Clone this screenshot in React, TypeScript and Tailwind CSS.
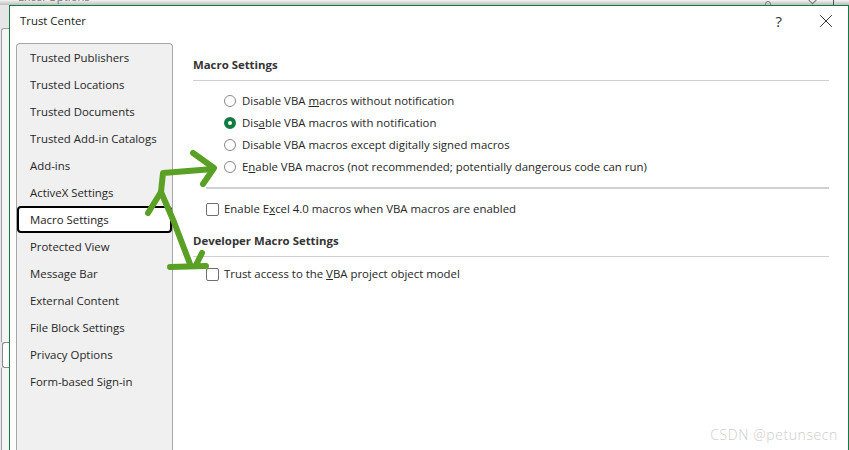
import React from 'react';
import { X } from 'lucide-react';

const categories = [
  'Trusted Publishers',
  'Trusted Locations',
  'Trusted Documents',
  'Trusted Add-in Catalogs',
  'Add-ins',
  'ActiveX Settings',
  'Macro Settings',
  'Protected View',
  'Message Bar',
  'External Content',
  'File Block Settings',
  'Privacy Options',
  'Form-based Sign-in',
];

const Radio = ({ checked }: { checked?: boolean }) => (
  <span
    className={`w-[12px] h-[12px] rounded-full shrink-0 bg-white ${
      checked ? 'border-[4px] border-[#107c41]' : 'border border-[#8a8a8a]'
    }`}
  />
);

const Check = () => <span className="w-[13px] h-[13px] rounded-[2px] border border-[#6f6f6f] bg-white shrink-0" />;

const App: React.FC = () => {
  return (
    <div
      className="w-[849px] h-[450px] overflow-hidden relative bg-[#f0f0f0] flex flex-col text-[11.4px] text-[#262626]"
      style={{ fontFamily: '"Open Sans", "Noto Sans", sans-serif' }}
    >
      {/* sliver of the Excel Options window behind */}
      <div className="h-[5px] shrink-0 bg-gradient-to-b from-[#f4f4f4] to-[#bdbdbd] pl-[18px] flex overflow-hidden">
        <span className="block -mt-[11px] leading-[16px] text-[#7a7a7a]">Excel Options</span>
        <span className="ml-auto mt-[1px] w-[6px] h-[8px] rounded-full border border-[#777]" />
        <span className="ml-[38px] -mt-[4px] w-[7px] h-[7px] rotate-45 border-r border-b border-[#777]" />
        <span className="ml-[17px] w-px h-[5px] bg-[#555] mr-[15px]" />
      </div>

      <div className="flex flex-1 min-h-0">
        <div className="w-[9px] shrink-0 bg-[#e6e6e6] pt-[23px] flex flex-col">
          <div className="h-[314px] ml-[1px] border-l border-t border-[#a0a0a0] rounded-tl-[3px] bg-[#f4f4f4]" />
          <div className="h-[26px] ml-[2px] border border-r-0 border-[#8a8a8a] rounded-l-[3px] bg-white" />
          <div className="flex-1 ml-[1px] border-l border-[#a0a0a0] bg-[#f4f4f4]" />
        </div>

        {/* Trust Center dialog */}
        <div className="flex-1 min-w-0 bg-white border-l border-t border-r border-[#107c41] flex flex-col">
          <div className="h-[37px] shrink-0 flex items-center pl-[10px] pb-[7px]">
            <span className="text-[#1a1a1a]">Trust Center</span>
            <span className="ml-auto text-[15px] text-[#333] mr-[33px]">?</span>
            <X size={22} strokeWidth={1} className="text-[#222] mr-[11px]" />
          </div>

          <div className="flex flex-1 min-h-0">
            <div className="w-[157px] ml-[6px] shrink-0 bg-[#f0f0f0] border border-b-0 border-[#a6a6a6] rounded-t-[4px] flex flex-col">
              {categories.map((c) =>
                c === 'Macro Settings' ? (
                  <div
                    key={c}
                    className="h-[27px] pl-[11px] flex items-center bg-white border-2 border-black rounded-[4px] text-[#1a1a1a]"
                  >
                    {c}
                  </div>
                ) : (
                  <div key={c} className="h-[27px] pl-[13px] flex items-center">
                    {c}
                  </div>
                ),
              )}
            </div>

            <div className="flex-1 min-w-0 pl-[20px] pr-[19px] pt-[14px] flex flex-col">
              <div className="font-bold h-[24px] leading-[16px] border-b border-[#d0d0d0] text-[#333]">Macro Settings</div>

              <div className="flex flex-col pl-[31px] mt-[9px]">
                <label className="h-[22px] flex items-center gap-[6px]">
                  <Radio />
                  <span>
                    Disable VBA <u>m</u>acros without notification
                  </span>
                </label>
                <label className="h-[22px] flex items-center gap-[6px]">
                  <Radio checked />
                  <span>
                    Dis<u>a</u>ble VBA macros with notification
                  </span>
                </label>
                <label className="h-[22px] flex items-center gap-[6px]">
                  <Radio />
                  <span>
                    Disable VBA macros except di<u>g</u>itally signed macros
                  </span>
                </label>
                <label className="h-[22px] flex items-center gap-[6px]">
                  <Radio />
                  <span>
                    E<u>n</u>able VBA macros (not recommended; potentially dangerous code can run)
                  </span>
                </label>
              </div>

              <div className="ml-[13px] mt-[9px] border-t-2 border-[#d0d0d0]" />
              <label className="ml-[13px] mt-[9px] h-[22px] flex items-center gap-[5px]">
                <Check />
                <span>
                  Enable E<u>x</u>cel 4.0 macros when VBA macros are enabled
                </span>
              </label>

              <div className="font-bold mt-[13px] h-[24px] leading-[16px] border-b border-[#d0d0d0] text-[#333]">
                Developer Macro Settings
              </div>
              <label className="ml-[13px] mt-[6px] h-[22px] flex items-center gap-[5px]">
                <Check />
                <span>
                  Trust access to the <u>V</u>BA project object model
                </span>
              </label>
            </div>
          </div>
        </div>
      </div>

      {/* hand-drawn green arrows */}
      <svg className="absolute inset-0 pointer-events-none" width="849" height="450" fill="none">
        <g stroke="#5aa024" strokeWidth="6" strokeLinecap="round" strokeLinejoin="round">
          <path d="M148 213 L161 192 L163 173 L213 169" />
          <path d="M193 153 L214 168 L203 184" />
          <path d="M161 192 L174 222 L190 264" />
          <path d="M170 267 L206 266 M196 265 L202 253" />
        </g>
      </svg>

      <div className="absolute right-[11px] bottom-[5px] text-[14px] font-light tracking-[0.6px] text-[#cdcdcd]">CSDN @petunsecn</div>
    </div>
  );
};

export default App;
